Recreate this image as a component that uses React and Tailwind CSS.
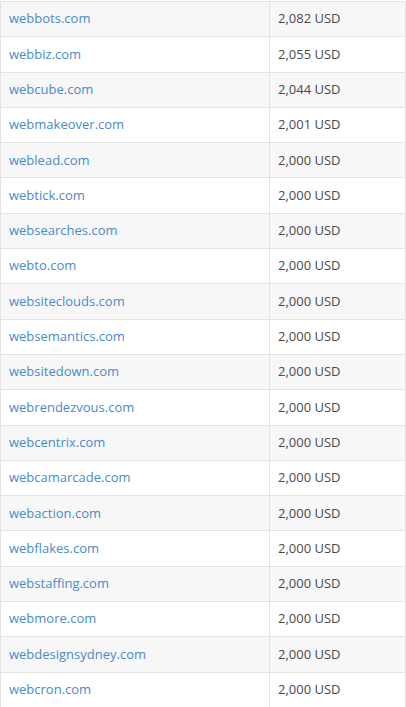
import React from 'react';

const rows = [
  ['webbots.com', '2,082 USD'],
  ['webbiz.com', '2,055 USD'],
  ['webcube.com', '2,044 USD'],
  ['webmakeover.com', '2,001 USD'],
  ['weblead.com', '2,000 USD'],
  ['webtick.com', '2,000 USD'],
  ['websearches.com', '2,000 USD'],
  ['webto.com', '2,000 USD'],
  ['websiteclouds.com', '2,000 USD'],
  ['websemantics.com', '2,000 USD'],
  ['websitedown.com', '2,000 USD'],
  ['webrendezvous.com', '2,000 USD'],
  ['webcentrix.com', '2,000 USD'],
  ['webcamarcade.com', '2,000 USD'],
  ['webaction.com', '2,000 USD'],
  ['webflakes.com', '2,000 USD'],
  ['webstaffing.com', '2,000 USD'],
  ['webmore.com', '2,000 USD'],
  ['webdesignsydney.com', '2,000 USD'],
  ['webcron.com', '2,000 USD'],
];

const App = () => {
  return (
    <div className="w-[406px] h-[707px] overflow-hidden bg-white pt-px" style={{ fontFamily: '"Open Sans", sans-serif' }}>
      <div className="border-l border-r border-[#e3e3e3] border-t">
        {rows.map(([domain, price], i) => (
          <div
            key={domain}
            className={`flex h-[35.3px] border-b border-[#e3e3e3] text-[13px] ${i % 2 === 0 ? 'bg-[#f7f7f7]' : 'bg-white'}`}
          >
            <div className="w-[269px] flex items-center pl-[8px] border-r border-[#e3e3e3]">
              <a href="#" className="text-[#4a8acb]">{domain}</a>
            </div>
            <div className="flex-1 flex items-center pl-[8px] text-[#4a4a4a]">{price}</div>
          </div>
        ))}
      </div>
    </div>
  );
};

export default App;
